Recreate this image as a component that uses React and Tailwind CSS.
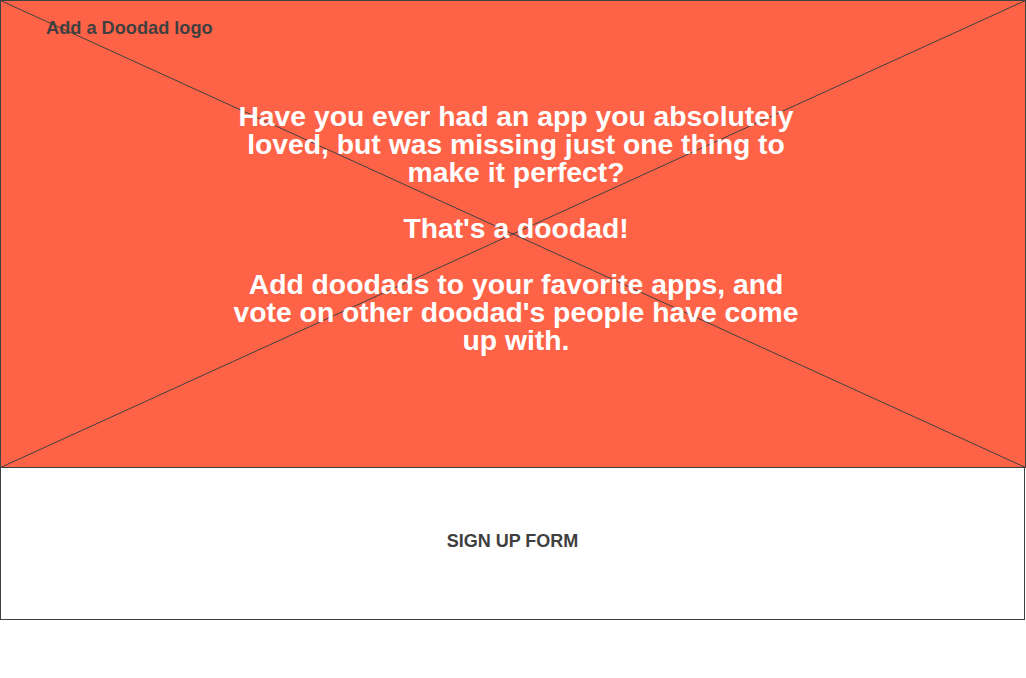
export default function App() {
  const font = { fontFamily: '"Liberation Sans", Arial, sans-serif' };
  return (
    <div className="w-[1026px] h-[678px] bg-white" style={font}>
      <div className="relative w-[1026px] h-[468px] border border-[#404040] bg-[#ff6347]">
        <svg
          className="absolute -top-px -left-px"
          width="1026"
          height="468"
          viewBox="0 0 1026 468"
        >
          <line x1="0.5" y1="0.5" x2="1025.5" y2="467.5" stroke="#404040" strokeWidth="1" />
          <line x1="0.5" y1="467.5" x2="1025.5" y2="0.5" stroke="#404040" strokeWidth="1" />
        </svg>
        <div className="relative flex flex-col">
          <div className="pl-[45px] pt-[16px] text-[18.2px] leading-[22px] font-bold text-[#3f3f3f]">
            Add a Doodad logo
          </div>
          <div className="mt-[63px] ml-[221px] w-[588px] text-center text-[28.3px] leading-[28px] font-bold text-white">
            <p>Have you ever had an app you absolutely loved, but was missing just one thing to make it perfect?</p>
            <p className="mt-[28px]">That's a doodad!</p>
            <p className="mt-[28px]">Add doodads to your favorite apps, and vote on other doodad's people have come up with.</p>
          </div>
        </div>
      </div>
      <div className="w-[1025px] h-[152px] border-x border-b border-[#404040] bg-white flex items-center justify-center">
        <span className="text-[18px] leading-[22px] font-bold text-[#3f3f3f] mt-[-5px]">SIGN UP FORM</span>
      </div>
    </div>
  );
}
